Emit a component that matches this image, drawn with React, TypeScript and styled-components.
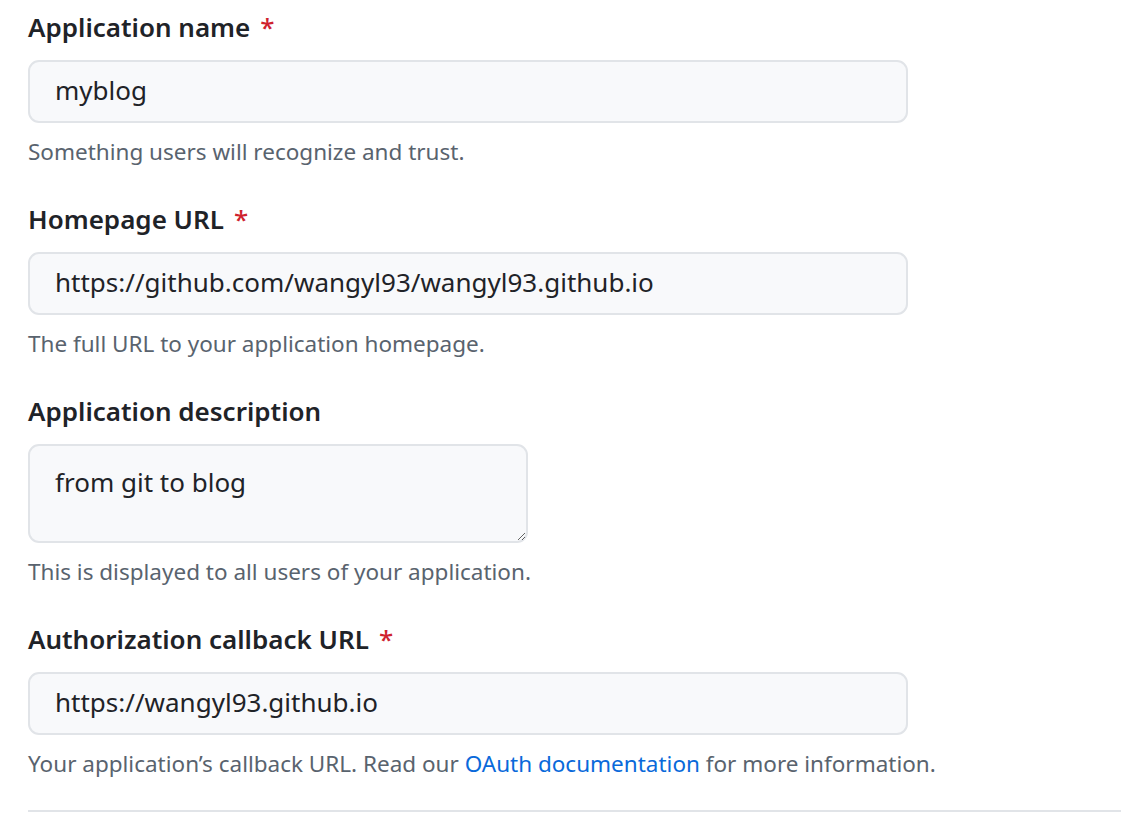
import React from 'react';
import styled, { createGlobalStyle } from 'styled-components';

const GlobalStyle = createGlobalStyle`
  body {
    margin: 0;
    background: #ffffff;
    font-family: "Noto Sans", "Open Sans", sans-serif;
    color: #1f2328;
  }
`;

const Form = styled.form`
  padding: 10px 0 0 28px;
  overflow: hidden;
`;

const FormGroup = styled.div`
  margin-bottom: 35px;
`;

const Label = styled.label`
  display: block;
  font-size: 26px;
  line-height: 35px;
  font-weight: 600;
  color: #1f2328;
  margin-bottom: 15px;
`;

const Required = styled.span`
  color: #cf222e;
  font-weight: 500;
  margin-left: 10px;
`;

const TextInput = styled.input`
  box-sizing: border-box;
  display: block;
  width: 880px;
  height: 63px;
  padding: 0 25px 3px;
  font-family: inherit;
  font-size: 26px;
  color: #1f2328;
  background: #f8f9fb;
  border: 2px solid #e1e4e8;
  border-radius: 11px;
  outline: none;
`;

const TextArea = styled.textarea`
  box-sizing: border-box;
  display: block;
  width: 500px;
  height: 99px;
  padding: 19px 25px;
  font-family: inherit;
  font-size: 26px;
  line-height: 35px;
  color: #1f2328;
  background: #f8f9fb;
  border: 2px solid #e1e4e8;
  border-radius: 11px;
  outline: none;
`;

const Note = styled.p`
  margin: 14px 0 0;
  font-size: 22.5px;
  line-height: 30px;
  color: #59636e;
`;

const Link = styled.a`
  color: #0969da;
  text-decoration: none;
`;

const Divider = styled.hr`
  margin: 31px 0 0;
  border: 0;
  border-top: 2px solid #e1e4e8;
`;

export default function App() {
  return (
    <>
      <GlobalStyle />
      <Form>
        <FormGroup>
          <Label>
            Application name<Required>*</Required>
          </Label>
          <TextInput defaultValue="myblog" />
          <Note>Something users will recognize and trust.</Note>
        </FormGroup>
        <FormGroup>
          <Label>
            Homepage URL<Required>*</Required>
          </Label>
          <TextInput defaultValue="https://github.com/wangyl93/wangyl93.github.io" />
          <Note>The full URL to your application homepage.</Note>
        </FormGroup>
        <FormGroup>
          <Label>Application description</Label>
          <TextArea defaultValue="from git to blog" />
          <Note>This is displayed to all users of your application.</Note>
        </FormGroup>
        <div>
          <Label>
            Authorization callback URL<Required>*</Required>
          </Label>
          <TextInput defaultValue="https://wangyl93.github.io" />
          <Note>
            Your application’s callback URL. Read our <Link href="#">OAuth documentation</Link> for
            more information.
          </Note>
        </div>
        <Divider />
      </Form>
    </>
  );
}
